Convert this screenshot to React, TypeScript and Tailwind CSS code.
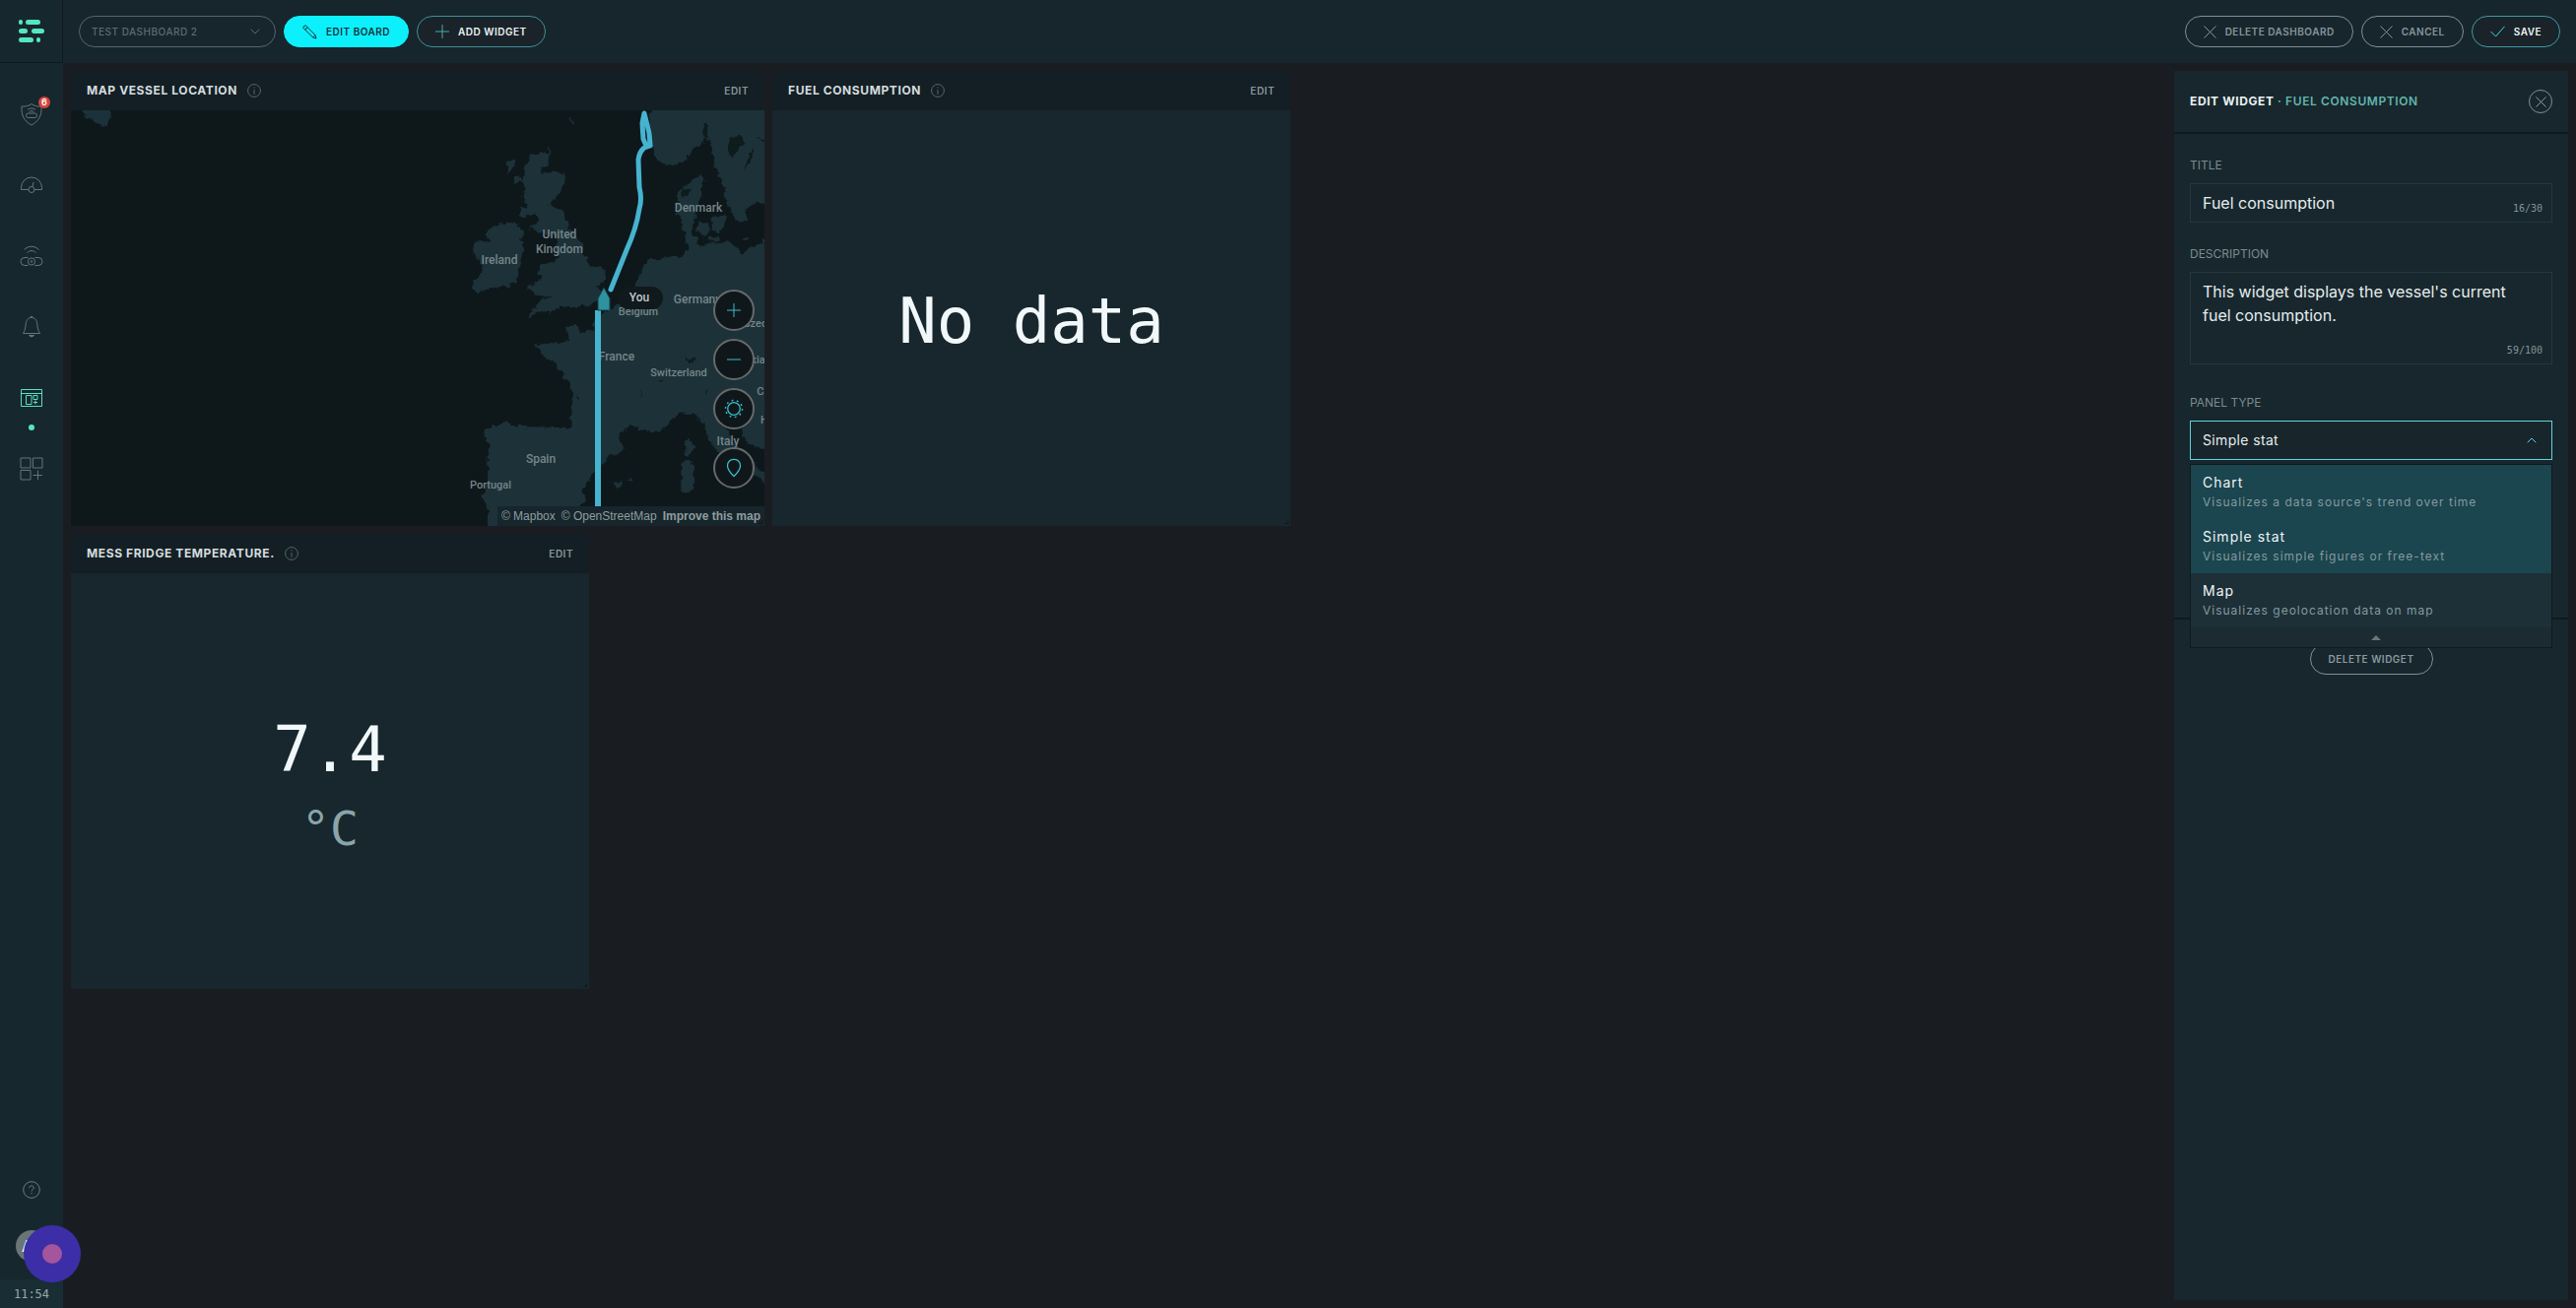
import React, { useState } from 'react';

const NAV_ICONS = ['shield', 'gauge', 'router', 'bell', 'dashboard', 'apps'] as const;
type NavIconName = (typeof NAV_ICONS)[number];

const PANEL_TYPES = [
  { name: 'Chart', description: "Visualizes a data source's trend over time", active: true },
  { name: 'Simple stat', description: 'Visualizes simple figures or free-text', active: true },
  { name: 'Map', description: 'Visualizes geolocation data on map', active: false },
];

const MAP_LABELS = [
  { text: 'Denmark', x: 637, y: 103, size: 12 },
  { text: 'United', x: 496, y: 130, size: 12 },
  { text: 'Kingdom', x: 496, y: 145, size: 12 },
  { text: 'Ireland', x: 435, y: 156, size: 12 },
  { text: 'Belgium', x: 576, y: 208, size: 11 },
  { text: 'Germany', x: 636, y: 196, size: 12 },
  { text: 'Czechia', x: 702, y: 220, size: 11 },
  { text: 'France', x: 554, y: 254, size: 12 },
  { text: 'Switzerland', x: 617, y: 270, size: 11 },
  { text: 'Slovakia', x: 684, y: 257, size: 11 },
  { text: 'Croatia', x: 714, y: 289, size: 11 },
  { text: 'Herz.', x: 713, y: 318, size: 11 },
  { text: 'Italy', x: 667, y: 340, size: 12 },
  { text: 'Spain', x: 477, y: 358, size: 12 },
  { text: 'Portugal', x: 426, y: 384, size: 11 },
];

const NavIcon: React.FC<{ name: NavIconName }> = ({ name }) => {
  const common = { width: 24, height: 24, viewBox: '0 0 24 24', fill: 'none', stroke: 'currentColor', strokeWidth: 1 };
  switch (name) {
    case 'shield':
      return (
        <svg {...common}>
          <path d="M12 1.500c2.600 2 6 2.800 10 2.600.6 9-2.600 15-10 18.900C4.600 19.100 1.400 13.100 2 4.100c4 .2 7.400-.6 10-2.600z" />
          <rect x="6.500" y="11" width="11" height="4.500" rx="2.200" />
          <path d="M8 7.500c2.300-2 5.700-2 8 0M9.700 9.500c1.400-1.100 3.200-1.100 4.600 0" />
        </svg>
      );
    case 'gauge':
      return (
        <svg {...common}>
          <path d="M9 16.500H1.500v-2a10.500 10.500 0 0 1 21 0v2H15" />
          <circle cx="12" cy="16.500" r="3" />
          <path d="M13 13.500l1-4.500" />
        </svg>
      );
    case 'router':
      return (
        <svg {...common}>
          <path d="M8.500 13.500H5a4 4 0 0 0 0 8h3.500M15.500 13.500H19a4 4 0 0 1 0 8h-3.500" />
          <circle cx="12" cy="17.500" r="3.600" />
          <circle cx="12" cy="17.500" r=".8" />
          <path d="M4.500 5.500c4.300-4.300 10.700-4.300 15 0M7.500 8.500c2.600-2.500 6.400-2.500 9 0" />
        </svg>
      );
    case 'bell':
      return (
        <svg {...common}>
          <path d="M12 2.500c-4 0-5.500 3.200-5.800 6.500-.3 4-1 6.800-2.700 9.500h17c-1.700-2.700-2.400-5.500-2.700-9.500C17.500 5.700 16 2.500 12 2.500zM10.800 2.500l.5-1.200h1.400l.5 1.200" />
          <path d="M9.500 20.500h5l-1.200 1.200h-2.600z" fill="currentColor" />
        </svg>
      );
    case 'dashboard':
      return (
        <svg {...common}>
          <path d="M1.500 3.500h21v17h-21zM1.500 7.500h21" />
          <path d="M6.500 9.500h5.500v9H6.500zM14 9.500h4v4h-4zM16 14.500v4M14 16.500h4" />
        </svg>
      );
    default:
      return (
        <svg {...common}>
          <path d="M1 1h10v10H1zM13.500 1h9.500v10h-9.500zM1 13.500h10V23H1zM18.500 13.500V23M13.500 18.500H23" />
        </svg>
      );
  }
};

const Cross: React.FC<{ size?: number }> = ({ size = 13 }) => (
  <svg width={size} height={size} viewBox="0 0 13 13" fill="none" stroke="currentColor">
    <path d="M.5.5l12 12M12.500.5l-12 12" />
  </svg>
);

const Chevron: React.FC<{ className?: string; up?: boolean }> = ({ className = '', up = false }) => (
  <svg className={className} width="10" height="6" viewBox="0 0 10 6" fill="none" stroke="currentColor">
    <path d={up ? 'M.7 5.300L5 1l4.300 4.300' : 'M.7.7L5 5 9.300.7'} />
  </svg>
);

const Sidebar: React.FC = () => (
  <aside className="flex w-16 shrink-0 flex-col bg-[#17272e]">
    <div className="flex h-16 shrink-0 items-center justify-center border-r border-b border-[#10191e]">
      <svg width="26" height="24" viewBox="0 0 26 24" fill="#55e6c1">
        <rect x="0" y="0" width="4" height="5" rx="2" />
        <rect x="7" y="0" width="15" height="5" rx="2.500" />
        <rect x="0" y="9" width="9" height="5" rx="2.500" />
        <rect x="13" y="9" width="13" height="5" rx="2.500" />
        <rect x="0" y="18" width="15" height="5" rx="2.500" />
        <rect x="18" y="18" width="4" height="5" rx="2" />
      </svg>
    </div>
    <nav className="flex flex-col pt-4">
      {NAV_ICONS.map((name) => (
        <a
          key={name}
          href={`#${name}`}
          aria-label={name}
          className={`relative flex h-[72px] items-center justify-center ${
            name === 'dashboard' ? 'text-[#55e0c4]' : 'text-[#64757b]'
          }`}
        >
          <NavIcon name={name} />
          {name === 'shield' && (
            <span className="absolute top-[18px] right-[13px] flex size-3 items-center justify-center rounded-full bg-[#d5443a] text-[9px] font-semibold text-white">
              6
            </span>
          )}
          {name === 'dashboard' && (
            <span className="absolute bottom-[3px] size-1.5 rounded-full bg-[#55e6c8]" />
          )}
        </a>
      ))}
    </nav>
    <div className="mt-auto flex flex-col items-center">
      <button aria-label="Help" className="text-[#6d7c81]">
        <svg width="18" height="18" viewBox="0 0 18 18" fill="none" stroke="currentColor">
          <circle cx="9" cy="9" r="8.300" />
          <path d="M6.700 7.200c0-1.500 1-2.300 2.300-2.300s2.300.8 2.300 2c0 1.700-2.300 1.700-2.300 3.600M9 12v1.300" />
        </svg>
      </button>
      <div className="relative mt-8 mb-[18px] flex size-8 items-center rounded-full bg-[#6b7578] pl-1.5 text-base font-medium text-white">
        A
        <button
          aria-label="Record"
          className="absolute top-[-5px] left-2 z-10 flex size-[58px] items-center justify-center rounded-full bg-[#3c2ea6]"
        >
          <span className="size-5 rounded-full bg-[#a4559c]" />
        </button>
      </div>
      <time className="flex h-[29px] w-full items-center justify-center bg-[#192d34] font-['DejaVu_Sans_Mono','Liberation_Mono',monospace] text-xs text-[#9aa7ab]">
        11:54
      </time>
    </div>
  </aside>
);

const TopBar: React.FC = () => {
  const pill = 'flex h-8 items-center gap-[9px] rounded-full border px-[18px] text-[10px] font-semibold tracking-wider';
  return (
    <header className="flex h-16 shrink-0 items-center justify-between bg-[#17262d] px-4">
      <div className="flex items-center gap-2">
        <div className="relative flex items-center text-[#5d6b6f]">
          <select
            aria-label="Dashboard"
            className="h-8 w-[200px] appearance-none rounded-full border border-[#56656a] bg-transparent px-3 text-[10px] font-medium tracking-wider"
          >
            <option>TEST DASHBOARD 2</option>
          </select>
          <Chevron className="pointer-events-none absolute right-4" />
        </div>
        <button className={`${pill} border-[#0cf0fc] bg-[#0cf0fc] text-[#14303a]`}>
          <svg width="15" height="15" viewBox="0 0 15 15" fill="none" stroke="currentColor">
            <path d="M.8 3.200Q1 1 3.200.8L13 10.600l1 3.400-3.400-1zM2.800 5.200l2.400-2.400M10.600 13l2.400-2.400" />
          </svg>
          EDIT BOARD
        </button>
        <button className={`${pill} border-[#3f8f96] bg-[#192329] text-[#eef4f5]`}>
          <svg width="14" height="14" viewBox="0 0 14 14" fill="none" stroke="#4aa9b3">
            <path d="M7 0v14M0 7h14" />
          </svg>
          ADD WIDGET
        </button>
      </div>
      <div className="flex items-center gap-2">
        <button className={`${pill} border-[#7f8f93] text-[#88969a]`}>
          <Cross />
          DELETE DASHBOARD
        </button>
        <button className={`${pill} border-[#7f8f93] text-[#88969a]`}>
          <Cross />
          CANCEL
        </button>
        <button className={`${pill} border-[#3f9aa3] bg-[#192329] text-[#f1f6f7]`}>
          <svg width="15" height="12" viewBox="0 0 15 12" fill="none" stroke="#45d3e0">
            <path d="M.5 6l5 5L14.500.8" />
          </svg>
          SAVE
        </button>
      </div>
    </header>
  );
};

interface WidgetProps {
  title: string;
  className?: string;
  children: React.ReactNode;
}

const Widget: React.FC<WidgetProps> = ({ title, className = '', children }) => (
  <section className={`flex h-[462px] flex-col ${className}`}>
    <header className="flex h-10 shrink-0 items-center bg-[#131f25] px-4">
      <h2 className="text-xs font-bold tracking-wider text-[#d5dcde]">{title}</h2>
      <svg className="ml-2.5 text-[#56656a]" width="14" height="14" viewBox="0 0 14 14" fill="none" stroke="currentColor">
        <circle cx="7" cy="7" r="6.400" />
        <path d="M7 3.300v1.200M7 6v4.800" />
      </svg>
      <button className="ml-auto text-[10px] font-semibold tracking-wider text-[#88979b]">EDIT</button>
    </header>
    <div className="relative flex min-h-0 flex-1 flex-col items-center justify-center bg-[#17272d] font-['DejaVu_Sans_Mono','Liberation_Mono',monospace]">
      {children}
      <span className="absolute right-0.5 bottom-0.5 size-1 border-r border-b border-[#0e181c]" />
    </div>
  </section>
);

const EuropeMap: React.FC = () => (
  <svg
    className="absolute inset-0 size-full font-[Roboto,sans-serif]"
    viewBox="0 0 704 422"
    preserveAspectRatio="xMaxYMid slice"
  >
    <defs>
      <filter id="coast" x="-5%" y="-5%" width="110%" height="110%">
        <feTurbulence type="fractalNoise" baseFrequency="0.130" numOctaves="3" seed="4" />
        <feDisplacementMap in="SourceGraphic" scale="8" xChannelSelector="R" yChannelSelector="G" />
      </filter>
    </defs>
    <rect width="704" height="422" fill="#0e181b" />
    <g filter="url(#coast)">
      <g transform="translate(398 -2) scale(.33333)" fill="#1b3138">
        {/* Great Britain */}
        <path d="M200 142L235 136 270 140 262 165 242 182 236 200 280 192 312 198 314 215 290 262 260 298 300 308 320 345 330 372 365 420 372 450 388 486 420 480 434 492 432 518 405 548 425 562 412 588 370 602 330 607 290 602 272 626 235 618 195 642 212 612 238 584 272 574 240 572 215 560 200 545 236 525 242 510 224 500 238 474 262 470 292 462 280 430 290 402 270 385 226 376 206 366 228 342 222 320 200 328 180 332 196 290 178 268 196 248 180 225 186 190 196 165z" />
        <path d="M135 168l22-16 6 8-14 30-14 10zM150 212l26-6 4 12-22 16zM182 300l10 2-6 28-10 2z" />
        {/* Ireland */}
        <path d="M92 362L130 347 165 350 182 376 168 396 186 412 176 442 172 480 164 530 110 544 45 562 24 546 46 515 62 480 40 452 30 430 42 410 82 404 66 386z" />
        {/* Scandinavia */}
        <path d="M580 0L568 30 570 95 582 142 605 165 640 178 672 160 735 92 756 108 764 170 798 250 812 300 828 334 850 352 868 340 862 304 885 290 960 292 960 0z" />
        {/* Danish islands */}
        <path d="M715 340l30 8 6 30-22 8-16-20zM758 330l38-4 4 30-20 26-22-14zM745 392l36 2-6 12-26-4zM850 392l18 4-8 10z" />
        {/* Continental Europe */}
        <path d="M656 250L690 228 725 200 738 214 726 250 716 290 706 322 702 350 692 376 716 400 722 422 760 410 808 404 850 440 880 425 918 402 960 400 960 1030 915 1034 885 1030 860 1015 845 975 826 930 800 905 770 915 775 950 810 990 840 1040 880 1070 918 1115 960 1130 960 1170 890 1120 840 1095 790 1062 750 1010 732 962 700 930 664 928 630 955 600 982 560 985 510 966 482 985 480 1020 488 1038 440 1062 440 1078 402 1100 380 1138 366 1162 374 1188 350 1215 330 1290 75 1290 75 1212 58 1185 76 1140 74 1060 84 1030 64 1000 75 976 125 958 160 968 270 972 328 972 335 870 322 830 280 780 215 722 290 710 325 706 315 664 345 660 356 682 400 678 400 642 440 616 478 590 522 542 545 490 566 462 620 450 660 456 686 432 680 400 664 350 650 318z" />
        {/* Corsica, Sardinia and the Balearics */}
        <path d="M676 1012l18-8 8 30-12 32-14-20zM664 1082l30-8 14 20-6 70-22 10-16-12zM458 1142l24-10 6 16-14 12zM500 1130l20-2-4 8z" />
        {/* Iceland */}
        <path d="M-1165 0h80l12 22-14 30-24-4-22-16-20-4z" fill="#1a303a" />
      </g>
      {/* Lakes and rivers */}
      <g transform="translate(398 -2) scale(.33333)" fill="#101b1f">
        <path d="M812 92l36-6 8 18-24 30-18 16-8-30zM872 130l14-4-12 40-16 22zM676 756l20 8 14 8-18 2zM590 826l22-6-6 10zM738 866l8-12-2 18zM540 870l3-14 2 30zM345 866l10 24-8-6zM900 90l18 4-6 8z" />
        <path d="M730 50l14-4 2 52-12-10zM666 248l14-8 14 6-8 22-18 8z" />
      </g>
      <path d="M506 7l4 8M485 37l2 8" stroke="#1b3138" strokeWidth="2" />
    </g>
    <g fill="#76858a" fontWeight="500" textAnchor="middle">
      {MAP_LABELS.map((label) => (
        <text key={label.text} x={label.x} y={label.y} fontSize={label.size}>
          {label.text}
        </text>
      ))}
    </g>
    {/* Vessel track */}
    <g fill="none" stroke="#46b3cf" strokeLinejoin="round" strokeLinecap="round">
      <path d="M582 3l-2 10 1 16 3 7 4-1-1-12z" strokeWidth="5" />
      <path d="M588 36l-6 2q-5 4-6 12l1 28q3 12 0 22-3 20-13 42l-16 40" strokeWidth="5" />
      <path d="M535 203v200" strokeWidth="6" strokeLinecap="butt" />
    </g>
    <path d="M535 191l6-11 6 11v12h-12z" fill="#2e929f" stroke="#14414a" />
    <rect x="555" y="179" width="46" height="23" rx="11.500" fill="#10191c" />
    <text x="577" y="194" fontSize="12" fill="#c0c9cb" fontWeight="500" textAnchor="middle">
      You
    </text>
  </svg>
);

const MapWidgetBody: React.FC = () => {
  const round =
    'flex size-[42px] items-center justify-center rounded-full border-2 border-[#66696b] bg-[#10171a] text-[#38bcc8]';
  return (
    <>
      <EuropeMap />
      <div className="absolute right-2.5 bottom-[38px] flex flex-col gap-2">
        <button aria-label="Zoom in" className={round}>
          <svg width="14" height="14" viewBox="0 0 14 14" stroke="currentColor">
            <path d="M7 0v14M0 7h14" />
          </svg>
        </button>
        <button aria-label="Zoom out" className={round}>
          <svg width="14" height="14" viewBox="0 0 14 14" stroke="currentColor">
            <path d="M0 7h14" />
          </svg>
        </button>
        <button aria-label="Day mode" className={round}>
          <svg width="20" height="20" viewBox="0 0 20 20" fill="none" stroke="currentColor" strokeWidth="1.300">
            <circle cx="10" cy="10" r="6.300" />
            <circle cx="10" cy="10" r="8.500" strokeDasharray="1.800 3.540" strokeWidth="1.500" />
          </svg>
        </button>
        <button aria-label="Center on vessel" className={`${round} mt-2.5`}>
          <svg width="16" height="20" viewBox="0 0 16 20" fill="none" stroke="currentColor" strokeWidth="1.300">
            <path d="M8 18.500c-2-2-6.500-6-6.500-10.500A6 6 0 0 1 8 1.500 6 6 0 0 1 14.500 8c0 4.500-4.500 8.500-6.500 10.500z" />
          </svg>
        </button>
      </div>
      <div className="absolute right-0 bottom-0 flex h-5 items-center gap-1.5 bg-[#16262c] px-1 font-['Liberation_Sans',Arial,sans-serif] text-xs text-[#8f9c9f]">
        <a href="#mapbox">© Mapbox</a>
        <a href="#osm">© OpenStreetMap</a>
        <a href="#improve" className="font-bold">
          Improve this map
        </a>
      </div>
    </>
  );
};

const EditPanel: React.FC = () => {
  const [title, setTitle] = useState('Fuel consumption');
  const [description, setDescription] = useState("This widget displays the vessel's current fuel consumption.");
  const label = 'mb-2.5 block text-xs leading-4 text-[#7c8b90]';
  const counter =
    "absolute right-2.5 bottom-2 font-['DejaVu_Sans_Mono','Liberation_Mono',monospace] text-[10px] leading-3 text-[#84939a]";

  return (
    <aside className="m-2 ml-[7px] flex w-[400px] shrink-0 flex-col bg-[#17272d]">
      <header className="flex h-16 items-center justify-between border-b-2 border-[#10191e] px-4">
        <h2 className="text-xs font-bold tracking-wider text-[#eaf1f2]">
          EDIT WIDGET <span className="font-semibold text-[#64b5ab]">· FUEL CONSUMPTION</span>
        </h2>
        <button
          aria-label="Close"
          className="flex size-6 items-center justify-center rounded-full border border-[#7f8f93] text-[#a3b0b3]"
        >
          <Cross size={11} />
        </button>
      </header>

      <form className="flex flex-col border-b-2 border-[#10191e] px-4 pt-6 pb-40">
        <label htmlFor="title" className={label}>
          TITLE
        </label>
        <div className="relative">
          <input
            id="title"
            value={title}
            onChange={(e) => setTitle(e.target.value)}
            className="block h-10 w-full border border-[#26363d] bg-transparent px-3 text-base text-[#e6edee] outline-none"
          />
          <span className={counter}>{title.length}/30</span>
        </div>

        <label htmlFor="description" className={`${label} mt-6`}>
          DESCRIPTION
        </label>
        <div className="relative">
          <textarea
            id="description"
            value={description}
            onChange={(e) => setDescription(e.target.value)}
            className="block h-[94px] w-full resize-none border border-[#26363d] bg-transparent py-[7px] pr-10 pl-3 text-base leading-6 text-[#e6edee] outline-none"
          />
          <span className={counter}>{description.length}/100</span>
        </div>

        <label htmlFor="panel-type" className={`${label} mt-[31px]`}>
          PANEL TYPE
        </label>
        <div className="relative">
          <select
            id="panel-type"
            defaultValue="Simple stat"
            className="block h-10 w-full appearance-none border border-[#5fd3e0] bg-[#18252b] px-3 text-sm tracking-wide text-[#e6edee] outline-none"
          >
            {PANEL_TYPES.map((type) => (
              <option key={type.name}>{type.name}</option>
            ))}
          </select>
          <Chevron up className="pointer-events-none absolute top-[17px] right-4 text-[#5fd3e0]" />

          {/* Open list of panel types */}
          <ul
            role="listbox"
            aria-label="Panel types"
            className="absolute top-11 right-0 left-0 z-10 border border-[#10191e] bg-[#1c2a31]"
          >
            {PANEL_TYPES.map((type) => (
              <li
                key={type.name}
                role="option"
                aria-selected={type.name === 'Simple stat'}
                className={`h-[55px] px-3 pt-2 ${type.active ? 'bg-[#1b454f]' : 'bg-[#1d3037]'}`}
              >
                <p className="text-sm leading-5 tracking-[1px] text-[#eef4f5]">{type.name}</p>
                <p className="text-xs leading-5 tracking-[1px] text-[#849a9f]">{type.description}</p>
              </li>
            ))}
            <li role="presentation" className="flex h-5 items-center justify-center pl-2.5 text-[#69777b]">
              <svg width="10" height="5" viewBox="0 0 10 5" fill="currentColor">
                <path d="M0 5l5-5 5 5z" />
              </svg>
            </li>
          </ul>
        </div>
      </form>

      <div className="flex justify-center pt-6">
        <button className="h-8 rounded-full border border-[#7f8f93] px-[18px] text-[10px] font-semibold tracking-wider text-[#8a999d]">
          DELETE WIDGET
        </button>
      </div>
    </aside>
  );
};

const App: React.FC = () => (
  <div className="flex min-h-screen bg-[#191d21] font-[Inter,sans-serif]">
    <Sidebar />
    <div className="flex min-w-0 flex-1 flex-col">
      <TopBar />
      <div className="flex flex-1">
        <main className="grid flex-1 grid-cols-12 content-start gap-2 pt-2 pl-2">
          <Widget title="MAP VESSEL LOCATION" className="col-span-4">
            <MapWidgetBody />
          </Widget>
          <Widget title="FUEL CONSUMPTION" className="col-span-3">
            <p className="pt-1.5 text-[64px] text-[#f2f8fa]">No data</p>
          </Widget>
          <Widget title="MESS FRIDGE TEMPERATURE." className="col-span-3 col-start-1">
            <p className="pt-4 text-[64px] leading-[80px] text-[#f2f8fa]">7.4</p>
            <p className="text-5xl leading-[80px] text-[#8ba4aa]">°C</p>
          </Widget>
        </main>
        <EditPanel />
      </div>
    </div>
  </div>
);

export default App;
